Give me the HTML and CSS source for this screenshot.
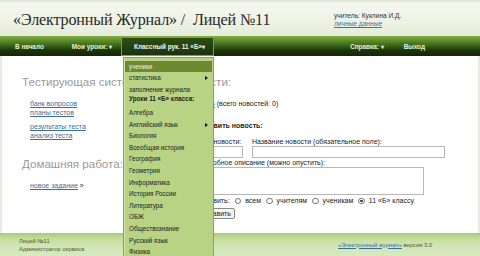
FILE: index.html
```html
<!DOCTYPE html>
<html lang="ru">
<head>
<meta charset="utf-8">
<title>Электронный Журнал</title>
<link rel="stylesheet" href="styles.css">
</head>
<body>
<div class="page">
  <header class="header">
    <h1 class="title">«Электронный Журнал» /&nbsp; Лицей №11</h1>
    <div class="user">
      <div>учитель: Куклина И.Д.</div>
      <a href="#" class="link">личные данные</a>
    </div>
  </header>
  <nav class="nav">
    <span class="nav-item first">В начало</span>
    <span class="nav-item second">Мои уроки: <span class="caret">▾</span></span>
    <span class="nav-item active">Классный рук. 11 «Б» <span class="caret">▾</span></span>
    <span class="nav-spacer"></span>
    <span class="nav-item help">Справка: <span class="caret">▾</span></span>
    <span class="nav-item exit">Выход</span>
  </nav>
  <main class="main">
    <section class="col-left">
      <h2 class="heading">Тестирующая система</h2>
      <div class="links first-block">
        <a href="#" class="link">банк вопросов</a>
        <a href="#" class="link">планы тестов</a>
      </div>
      <div class="links second-block">
        <a href="#" class="link">результаты теста</a>
        <a href="#" class="link">анализ теста</a>
      </div>
      <h2 class="heading hw">Домашняя работа:</h2>
      <div class="links hw-link"><span><a href="#" class="link">новое задание</a> <span class="raquo">»</span></span></div>
    </section>
    <section class="col-right">
      <h2 class="heading news-heading">Новости:</h2>
      <div class="news-count"><a href="#" class="link">архив</a> (всего новостей: 0)</div>
      <div class="add-title">Добавить новость:</div>
      <div class="form-row">
        <label class="field f-date"><span>Дата новости:</span><input type="text" class="input"></label>
        <label class="field f-name"><span>Название новости (обязательное поле):</span><input type="text" class="input"></label>
      </div>
      <div class="desc-label">Подробное описание (можно опустить):</div>
      <textarea class="textarea"></textarea>
      <div class="radios">
        <span>Отправить:</span>
        <span class="radio"></span><span>всем</span>
        <span class="radio"></span><span>учителям</span>
        <span class="radio"></span><span>ученикам</span>
        <span class="radio checked"></span><span>11 «Б» классу</span>
      </div>
      <button class="btn">Добавить</button>
    </section>
  </main>
  <footer class="footer">
    <div class="foot-left">
      <div>Лицей №11</div>
      <div>Администратор сервиса</div>
    </div>
    <div class="foot-right"><a href="#" class="link">«Электронный журнал»</a> версия 3.0</div>
  </footer>

  <ul class="menu">
    <li class="menu-item hl">ученики</li>
    <li class="menu-item sub">статистика</li>
    <li class="menu-item">заполнение журнала</li>
    <li class="menu-head">Уроки 11 «Б» класса:</li>
    <li class="menu-item">Алгебра</li>
    <li class="menu-item sub">Английский язык</li>
    <li class="menu-item">Биология</li>
    <li class="menu-item">Всеобщая история</li>
    <li class="menu-item">География</li>
    <li class="menu-item">Геометрия</li>
    <li class="menu-item">Информатика</li>
    <li class="menu-item">История России</li>
    <li class="menu-item">Литература</li>
    <li class="menu-item">ОБЖ</li>
    <li class="menu-item">Обществознание</li>
    <li class="menu-item">Русский язык</li>
    <li class="menu-item">Физика</li>
  </ul>
</div>
</body>
</html>
```

FILE: styles.css
```css
* { box-sizing: border-box; }
html, body { margin: 0; padding: 0; }
body {
  width: 480px;
  height: 256px;
  overflow: hidden;
  font-family: "Liberation Sans", Arial, sans-serif;
  color: #2a2a2a;
  background: #fff;
}
.page {
  position: relative;
  width: 480px;
  height: 256px;
  display: flex;
  flex-direction: column;
}
.link { color: #3d6f9e; text-decoration: underline; }

/* header */
.header {
  height: 36px;
  display: flex;
  align-items: flex-start;
  background: linear-gradient(#f6f8f0, #edf2e3 60%, #e6ecda);
  border-top: 2px solid #e2e8d8;
}
.title {
  margin: 8px 0 0 13px;
  font-family: "Liberation Serif", "Times New Roman", serif;
  font-weight: normal;
  font-size: 16.1px;
  letter-spacing: -0.15px;
  line-height: 20px;
  color: #2a2a2a;
  width: 321px;
  white-space: nowrap;
}
.user {
  margin-top: 10px;
  font-size: 6.6px;
  line-height: 8px;
  color: #333;
}
.user .link { color: #3c73a8; }

/* nav */
.nav {
  height: 20px;
  display: flex;
  align-items: center;
  background: linear-gradient(#83ad44 0, #5b8a26 25%, #35601a 50%, #1b3608 72%, #13270a 100%);
  font-size: 6.4px;
  font-weight: bold;
  color: #e6efd6;
  padding-left: 15px;
}
.caret { font-size: 6px; }
.nav-item { white-space: nowrap; }
.nav-item.second { margin-left: 28px; }
.nav-item.active {
  margin-left: 9px;
  height: 19px;
  width: 93px;
  padding-left: 12px;
  display: flex;
  align-items: center;
  background: linear-gradient(#2f4e14, #1b330a);
  border: 1px solid #7e9b55;
  color: #f2f6ea;
}
.nav-spacer { flex: 1; }
.nav-item.help { margin-right: 20px; }
.nav-item.exit { margin-right: 55px; }

/* main */
.main {
  flex: 1;
  display: flex;
  padding-top: 19px;
  background: #fff;
  border-left: 2px solid #e6ecdc;
  border-right: 2px solid #e6ecdc;
}
.heading {
  margin: 0;
  font-size: 11.6px;
  line-height: 14px;
  font-weight: normal;
  color: #9a9a9a;
  white-space: nowrap;
}
.news-heading { margin-left: -13px; }
.col-left {
  width: 194px;
  padding-left: 20px;
}
.links {
  display: flex;
  flex-direction: column;
  align-items: flex-start;
  padding-left: 8px;
  font-size: 7px;
  line-height: 8.5px;
}
.first-block { margin-top: 11px; }
.second-block { margin-top: 6px; }
.hw { margin-top: 17px; }
.hw-link { margin-top: 11px; }
.raquo { color: #333; font-size: 7px; }

.col-right {
  font-size: 7px;
  line-height: 8px;
  color: #222;
}
.news-count { margin-top: 11px; line-height: 8.5px; }
.add-title { margin-top: 13.5px; font-weight: bold; }
.form-row { display: flex; margin-top: 8px; gap: 9px; }
.field { display: flex; flex-direction: column; }
.f-date { width: 47px; white-space: nowrap; }
.f-name { width: 193px; }
.input {
  height: 12px;
  border: 1px solid #b8b8b8;
  padding: 0;
  margin: 0;
  width: 100%;
  background: #fff;
}
.desc-label { margin-top: 1px; }
.textarea {
  display: block;
  width: 228px;
  height: 28px;
  border: 1px solid #b8b8b8;
  margin: 0;
  padding: 0;
  resize: none;
}
.radios {
  margin-top: 2px;
  margin-left: -3px;
  display: flex;
  align-items: center;
  gap: 4px;
  white-space: nowrap;
}
.radio {
  width: 6.5px;
  height: 6.5px;
  border: 1px solid #777;
  border-radius: 50%;
  background: #fff;
  margin-left: 1px;
  position: relative;
}
.radio.checked::after {
  content: "";
  position: absolute;
  left: 1px; top: 1px;
  width: 2.5px; height: 2.5px;
  border-radius: 50%;
  background: #333;
}
.btn {
  display: block;
  margin-top: 3px;
  width: 39px;
  height: 11px;
  padding: 0;
  font-family: "Liberation Sans", Arial, sans-serif;
  font-size: 7px;
  background: #f4f4f0;
  border: 1px solid #888;
  border-radius: 2px;
  color: #222;
}

/* footer */
.footer {
  height: 23px;
  display: flex;
  align-items: center;
  justify-content: space-between;
  background: linear-gradient(#a6ca74 0, #c4de9e 25%, #d2e6b6 60%, #d7e9bf 100%);
  font-size: 5.8px;
  line-height: 8px;
  color: #4b5a3a;
  padding-left: 19px;
}
.foot-right { margin-right: 48px; }
.foot-right .link { color: #3c6fa0; }

/* dropdown */
.menu {
  position: absolute;
  left: 123px;
  top: 57px;
  width: 91px;
  height: 210px;
  margin: 0;
  padding: 2.5px 1px 0;
  list-style: none;
  background: #b8d383;
  border: 1px solid #86a257;
  box-shadow: inset 1px 0 0 #d2e5a8;
  font-size: 6.3px;
  color: #222;
}
.menu-item {
  height: 11.6px;
  line-height: 11.6px;
  padding-left: 4px;
  position: relative;
  white-space: nowrap;
}
.menu-item.hl {
  background: #6f8832;
  color: #eef4e0;
}
.menu-item.sub::after {
  content: "";
  position: absolute;
  right: 4px;
  top: 4px;
  border-left: 3px solid #111;
  border-top: 2px solid transparent;
  border-bottom: 2px solid transparent;
}
.menu-head {
  height: 7.8px;
  line-height: 7.8px;
  margin-bottom: 4px;
  padding-left: 4px;
  font-weight: bold;
  white-space: nowrap;
}
```
